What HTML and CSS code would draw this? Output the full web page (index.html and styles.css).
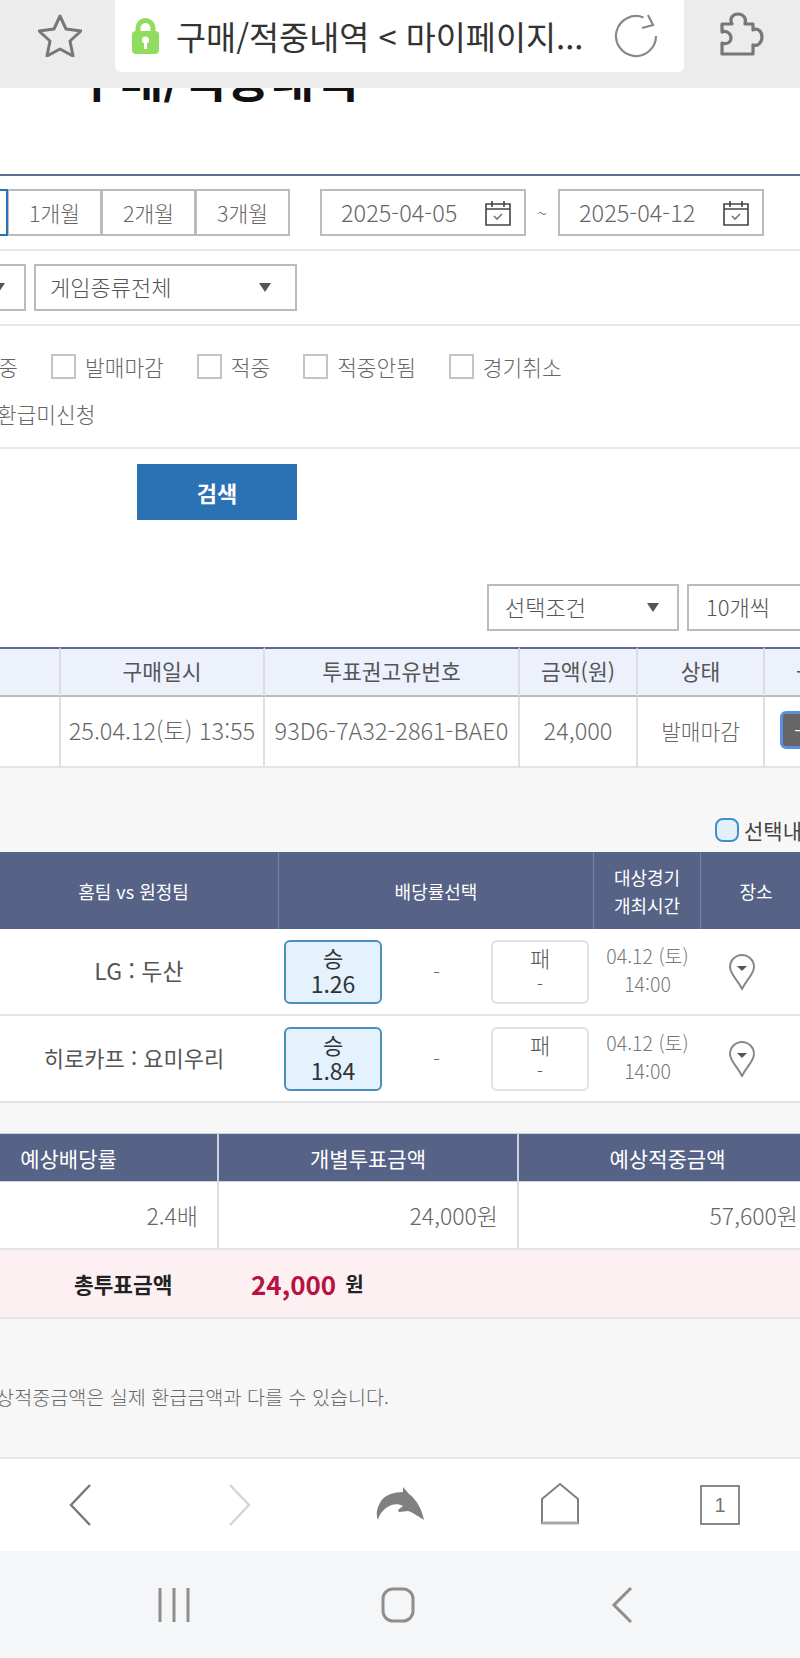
FILE: index.html
```html
<!DOCTYPE html>
<html lang="ko">
<head>
  <meta charset="UTF-8">
  <meta name="viewport" content="width=device-width, initial-scale=1.0">
  <title>구매/적중내역</title>
  <link rel="stylesheet" href="styles.css">
</head>
<body>

  <!-- browser address bar -->
  <header class="topbar">
    <svg class="star" width="44" height="44" viewBox="0 0 44 44"><path d="M22 3l6 13 15 2-11 10 3 15-13-7-13 7 3-15L1 18l15-2z"/></svg>
    <div class="urlbox">
      <svg class="lock" width="27" height="36" viewBox="0 0 27 36"><path d="M6 15V10a7.500 7.500 0 0 1 15 0v5" fill="none" stroke="#8fdc5f" stroke-width="5"/><rect y="13" width="27" height="23" rx="4" fill="#8fdc5f"/><circle cx="13.500" cy="22" r="3.500" fill="#fff"/><rect x="12" y="23" width="3" height="8" fill="#fff"/></svg>
      <span class="urltext">구매/적중내역 &lt; 마이페이지...</span>
      <svg class="reload" width="44" height="44" viewBox="0 0 44 44"><path d="M42 22A20 20 0 1 1 29.500 3.500" fill="none" stroke="#888" stroke-width="2.200"/><path d="M34 1l5 10-11 3" fill="none" stroke="#888" stroke-width="2.200"/></svg>
    </div>
    <svg class="puzzle" width="44" height="44" viewBox="0 0 44 44"><path d="M2 12H12C9 6 13 2 18 2s9 4 7 10H33V18C38 15 42 20 42 25s-4 10-9 8V42H2V31C7 33 11 30 11 26S7 18 2 20Z"/></svg>
  </header>

  <main class="page">
    <h1>구매/적중내역</h1>

    <section class="filters">
      <div class="filter-row dates">
        <div class="period">
          <button class="period-btn on">1주일</button>
          <button class="period-btn">1개월</button>
          <button class="period-btn">2개월</button>
          <button class="period-btn">3개월</button>
        </div>
        <div class="date-box"><span>2025-04-05</span>
          <svg width="26" height="26" viewBox="0 0 26 26"><path d="M1 4h24v21H1zM1 9h24M7 1v6M19 1v6" fill="none" stroke="#444" stroke-width="1.600"/><path d="M9 16l3 3 5-5" fill="none" stroke="#777" stroke-width="1.600"/></svg>
        </div>
        <span class="tilde">~</span>
        <div class="date-box"><span>2025-04-12</span>
          <svg width="26" height="26" viewBox="0 0 26 26"><path d="M1 4h24v21H1zM1 9h24M7 1v6M19 1v6" fill="none" stroke="#444" stroke-width="1.600"/><path d="M9 16l3 3 5-5" fill="none" stroke="#777" stroke-width="1.600"/></svg>
        </div>
      </div>

      <div class="filter-row selects">
        <div class="select sel-off"><span>전체</span><i class="arrow"></i></div>
        <div class="select sel-game"><span>게임종류전체</span><i class="arrow"></i></div>
      </div>

      <div class="filter-row checks">
        <div class="check-line line-one">
          <label class="check"><i class="box"></i>발매중</label>
          <label class="check"><i class="box"></i>발매마감</label>
          <label class="check"><i class="box"></i>적중</label>
          <label class="check"><i class="box"></i>적중안됨</label>
          <label class="check"><i class="box"></i>경기취소</label>
        </div>
        <div class="check-line line-two">
          <label class="check"><i class="box"></i>환급미신청</label>
        </div>
      </div>

      <button class="search-btn">검색</button>
    </section>

    <div class="list-opts">
      <div class="select sel-cond"><span>선택조건</span><i class="arrow"></i></div>
      <div class="select sel-count"><span>10개씩</span><i class="arrow"></i></div>
    </div>

    <table class="list">
      <colgroup><col class="l1"><col class="l2"><col class="l3"><col class="l4"><col class="l5"><col class="l6"></colgroup>
      <tr>
        <th>번호</th><th>구매일시</th><th>투표권고유번호</th><th>금액(원)</th><th>상태</th><th>-</th>
      </tr>
      <tr>
        <td>1</td><td class="num">25.04.12(토) 13:55</td><td class="num">93D6-7A32-2861-BAE0</td><td class="num">24,000</td><td>발매마감</td>
        <td><button class="minus">-</button></td>
      </tr>
    </table>

    <section class="detail">
      <label class="only-selected"><i class="round-box"></i>선택내역만 보기</label>

      <table class="games">
        <colgroup><col class="g1"><col class="g2"><col class="g3"><col class="g4"></colgroup>
        <tr>
          <th>홈팀 vs 원정팀</th><th>배당률선택</th><th>대상경기<br>개최시간</th><th>장소</th>
        </tr>
        <tr>
          <td class="teams short">LG : 두산</td>
          <td>
            <div class="odds">
              <div class="odd picked"><b>승</b><strong>1.26</strong></div>
              <span>-</span>
              <div class="odd"><b>패</b><em>-</em></div>
            </div>
          </td>
          <td class="when">04.12 (토)<br>14:00</td>
          <td class="place"><svg width="28" height="36" viewBox="0 0 28 36"><path d="M14 35C9 25 2 20 2 13a12 12 0 0 1 24 0c0 7-7 12-12 22z" fill="#fff" stroke="#888" stroke-width="2"/><path d="M9 12h10l-5 5z" fill="#555"/></svg></td>
        </tr>
        <tr>
          <td class="teams">히로카프 : 요미우리</td>
          <td>
            <div class="odds">
              <div class="odd picked"><b>승</b><strong>1.84</strong></div>
              <span>-</span>
              <div class="odd"><b>패</b><em>-</em></div>
            </div>
          </td>
          <td class="when">04.12 (토)<br>14:00</td>
          <td class="place"><svg width="28" height="36" viewBox="0 0 28 36"><path d="M14 35C9 25 2 20 2 13a12 12 0 0 1 24 0c0 7-7 12-12 22z" fill="#fff" stroke="#888" stroke-width="2"/><path d="M9 12h10l-5 5z" fill="#555"/></svg></td>
        </tr>
      </table>

      <table class="sums">
        <colgroup><col class="s1"><col class="s2"><col class="s3"></colgroup>
        <tr><th>예상배당률</th><th>개별투표금액</th><th>예상적중금액</th></tr>
        <tr><td>2.4배</td><td>24,000원</td><td>57,600원</td></tr>
      </table>

      <div class="total">
        <span class="total-label">총투표금액</span>
        <span class="total-num">24,000</span>
        <span class="total-unit">원</span>
      </div>

      <p class="notice">※ 예상적중금액은 실제 환급금액과 다를 수 있습니다.</p>
    </section>
  </main>

  <!-- browser toolbar -->
  <nav class="toolbar">
    <svg width="24" height="44" viewBox="0 0 24 44"><path d="M22 2L3 22l19 20" fill="none" stroke="#777" stroke-width="2.400"/></svg>
    <svg width="24" height="44" viewBox="0 0 24 44"><path d="M2 2l19 20L2 42" fill="none" stroke="#d4d4d4" stroke-width="2.400"/></svg>
    <svg width="48" height="40" viewBox="0 0 48 40"><path d="M27 2L33 9C40 14 46 24 48 35C45 33 36 27 32 26L23 27L22 25L27 21C22 18 15 19 10 23C6 26 3 30 2 35C0 30 0 24 5 16C9 10 18 7 27 7Z" fill="#808080"/></svg>
    <svg class="home" width="40" height="44" viewBox="0 0 40 44"><path d="M20 2L38 17v24H2V17z" fill="none" stroke="#808080" stroke-width="2"/><path d="M2 41h36" stroke="#aaa" stroke-width="3"/></svg>
    <div class="tabs">1</div>
  </nav>

  <!-- android navigation -->
  <nav class="androidbar">
    <svg width="34" height="36" viewBox="0 0 34 36"><path d="M3 1v34M17 1v34M31 1v34" stroke="#8e8e8e" stroke-width="3" fill="none"/></svg>
    <svg width="34" height="36" viewBox="0 0 34 36"><rect x="2" y="2" width="30" height="32" rx="10" fill="none" stroke="#8e8e8e" stroke-width="3"/></svg>
    <svg width="22" height="36" viewBox="0 0 22 36"><path d="M20 1L3 18l17 17" fill="none" stroke="#8e8e8e" stroke-width="3"/></svg>
  </nav>

</body>
</html>
```

FILE: styles.css
```css
* {
  box-sizing: border-box;
}

html, body {
  margin: 0;
  height: 100%;
}

body {
  width: 800px;
  height: 1658px;
  display: flex;
  flex-direction: column;
  overflow: hidden;
  font-family: "Noto Sans CJK KR", "Noto Sans", sans-serif;
  font-weight: 300;
  color: #666;
  background-color: #fff;
}

button {
  font-family: inherit;
  font-weight: inherit;
  padding: 0;
}

i, em {
  font-style: normal;
}

/* top bar */
.topbar {
  height: 88px;
  flex: none;
  display: flex;
  align-items: flex-start;
  background-color: #ececec;
}

.star {
  margin: 13px 0 0 38px;
  fill: none;
  stroke: #777;
  stroke-width: 3;
  stroke-linejoin: round;
}

.urlbox {
  width: 569px;
  height: 72px;
  margin-left: 33px;
  padding-left: 17px;
  display: flex;
  align-items: center;
  background-color: #fff;
  border-radius: 0 0 6px 6px;
}

.lock {
  flex: none;
}

.urltext {
  width: 435px;
  margin: -2px 0 0 17px;
  font-size: 32.700px;
  font-weight: 400;
  color: #333;
  white-space: nowrap;
}

.reload {
  margin-left: 3px;
  flex: none;
}

.puzzle {
  margin: 12px 0 0 36px;
  fill: none;
  stroke: #777;
  stroke-width: 3.200;
  stroke-linejoin: round;
}

/* page */
.page {
  flex: 1;
  min-height: 0;
  overflow: hidden;
}

h1 {
  height: 60px;
  margin: -42px 0 68px 75px;
  font-size: 48px;
  line-height: 60px;
  font-weight: 700;
  color: #111;
  white-space: nowrap;
}

.filters {
  border-top: 2px solid #5c6b8f;
}

.filter-row {
  display: flex;
  border-bottom: 2px solid #e8e8e8;
}

.dates, .selects {
  height: 75px;
  padding-top: 13px;
}

.period {
  display: flex;
  margin-left: -86px;
}

.period-btn {
  width: 95px;
  height: 47px;
  margin-left: -1px;
  font-size: 21.500px;
  color: #666;
  background-color: #fff;
  border: 2px solid #bbb;
}

.period-btn.on {
  position: relative;
  border-color: #2b72b4;
}

.date-box {
  width: 206px;
  height: 47px;
  margin-left: 30px;
  padding: 0 13px 0 19px;
  display: flex;
  align-items: center;
  justify-content: space-between;
  font-size: 23.500px;
  border: 2px solid #bbb;
}

.date-box span {
  margin-top: -2px;
}

.tilde {
  width: 32px;
  line-height: 47px;
  text-align: center;
  font-size: 18px;
}

.tilde + .date-box {
  margin-left: 0;
}

.select {
  height: 47px;
  display: flex;
  align-items: center;
  justify-content: space-between;
  font-size: 22px;
  color: #555;
  border: 2px solid #bbb;
  flex: none;
}

.select span {
  margin-top: -3px;
}

.arrow {
  width: 0;
  height: 0;
  border-left: 6px solid transparent;
  border-right: 6px solid transparent;
  border-top: 9px solid #555;
}

.sel-off {
  width: 120px;
  margin-left: -94px;
  padding: 0 19px 0 20px;
}

.sel-game {
  width: 263px;
  margin-left: 8px;
  padding: 0 24px 0 14px;
}

.checks {
  height: 123px;
  padding-top: 17px;
  display: block;
}

.check-line {
  display: flex;
  gap: 33px;
  height: 47px;
  font-size: 21.400px;
  line-height: 47px;
}

.line-one {
  margin-left: -75px;
}

.line-two {
  margin-left: -37px;
}

.check {
  display: flex;
  align-items: center;
  gap: 9px;
  white-space: nowrap;
}

.box {
  width: 25px;
  height: 25px;
  background-color: #fff;
  border: 2px solid #c4c4c4;
}

.search-btn {
  display: block;
  width: 160px;
  height: 56px;
  margin: 15px 0 0 137px;
  font-size: 22px;
  font-weight: 700;
  color: #fff;
  background-color: #2b72b4;
  border: none;
}

.list-opts {
  display: flex;
  gap: 8px;
  padding: 64px 0 16px 487px;
}

.sel-cond {
  width: 192px;
  padding: 0 18px 0 16px;
}

.sel-count {
  width: 160px;
  padding: 0 20px 0 17px;
}

/* tables */
table {
  table-layout: fixed;
  border-collapse: separate;
  border-spacing: 0;
}

.list {
  width: 964px;
  margin-left: -99px;
}

.l1 { width: 160px; }
.l2 { width: 204px; }
.l3 { width: 255px; }
.l4 { width: 118px; }
.l5 { width: 127px; }
.l6 { width: 100px; }

.list th {
  height: 50px;
  padding: 0 0 3px;
  font-size: 21.500px;
  font-weight: 400;
  color: #555;
  background-color: #edf1fb;
  border-top: 2px solid #5c6b8f;
  border-bottom: 2px solid #bbb;
  border-right: 2px solid #ddd;
}

.list th:last-child {
  padding-left: 31px;
  text-align: left;
}

.list td {
  height: 71px;
  padding: 0 0 3px;
  font-size: 21.400px;
  text-align: center;
  white-space: nowrap;
  border-bottom: 2px solid #e4e4e4;
  border-right: 2px solid #e0e0e0;
}

.list td.num {
  font-size: 23.500px;
}

.list td:last-child {
  text-align: left;
  padding-left: 15px;
}

.minus {
  display: block;
  width: 60px;
  height: 38px;
  padding-left: 11px;
  text-align: left;
  font-size: 24px;
  line-height: 30px;
  color: #fff;
  background-color: #666;
  border: 3px solid #5b8fe0;
  border-radius: 6px;
}

.detail {
  height: 691px;
  background-color: #f7f7f7;
}

.only-selected {
  height: 84px;
  padding: 50px 0 0 715px;
  display: flex;
  align-items: flex-start;
  gap: 5px;
  font-size: 21px;
  line-height: 24px;
  font-weight: 400;
  color: #444;
  white-space: nowrap;
}

.round-box {
  width: 24px;
  height: 24px;
  flex: none;
  background-color: #e2f0fb;
  border: 2px solid #3f8fc9;
  border-radius: 8px;
}

.games {
  width: 823px;
  margin-left: -11px;
  background-color: #fff;
}

.g1 { width: 290px; }
.g2 { width: 315px; }
.g3 { width: 107px; }
.g4 { width: 111px; }

.games th {
  height: 77px;
  font-size: 18px;
  line-height: 28px;
  font-weight: 400;
  color: #fff;
  background-color: #566386;
  border-right: 1px solid #77829f;
}

.games td {
  height: 87px;
  padding: 0;
  text-align: center;
  border-bottom: 2px solid #e4e4e4;
}

.games .teams {
  padding-bottom: 4px;
  font-size: 22px;
  font-weight: 400;
  color: #555;
}

.games .short {
  padding-left: 10px;
  font-size: 23px;
}

.odds {
  display: flex;
  justify-content: space-between;
  align-items: center;
  padding: 0 5px;
  font-size: 20px;
}

.odd {
  width: 98px;
  height: 64px;
  padding-bottom: 3px;
  display: flex;
  flex-direction: column;
  align-items: center;
  justify-content: center;
  font-size: 22px;
  line-height: 26px;
  color: #555;
  background-color: #fff;
  border: 2px solid #e2e2e2;
  border-radius: 6px;
}

.odd b {
  font-weight: 300;
}

.odd strong {
  font-size: 23px;
  font-weight: 400;
}

.odd em {
  font-size: 18px;
}

.picked {
  color: #333;
  background-color: #e3f2fd;
  border-color: #4a8fbd;
}

.picked b {
  font-weight: 400;
}

.games .when {
  padding-bottom: 3px;
  font-size: 19.500px;
  line-height: 28px;
  color: #777;
}

.games .place {
  padding-right: 30px;
}

.place svg {
  display: inline-block;
  margin-top: 6px;
}

.sums {
  width: 899px;
  margin: 30px 0 0 -80px;
  background-color: #fff;
}

.s1 { width: 299px; }
.s2 { width: 300px; }
.s3 { width: 300px; }

.sums th {
  height: 49px;
  font-size: 21px;
  font-weight: 400;
  color: #fff;
  background-color: #566386;
  border-right: 2px solid #ccd2de;
  border-top: 1px solid #ccd2de;
  border-bottom: 1px solid #ccd2de;
}

.sums th:last-child {
  padding-right: 2px;
}

.sums td {
  height: 68px;
  padding-right: 19px;
  font-size: 23px;
  text-align: right;
  border-right: 2px solid #e0e0e0;
  border-bottom: 2px solid #e4e4e4;
}

.total {
  height: 69px;
  padding-left: 74px;
  display: flex;
  align-items: center;
  background-color: #fcf0f2;
  border-bottom: 2px solid #e4e4e4;
}

.total-label {
  width: 177px;
  font-size: 21.400px;
  font-weight: 700;
  color: #222;
}

.total-num {
  font-size: 26px;
  font-weight: 700;
  color: #b8123f;
}

.total-unit {
  margin-left: 9px;
  font-size: 20px;
  font-weight: 700;
  color: #222;
}

.notice {
  margin: 65px 0 0 -47px;
  font-size: 19.600px;
  line-height: 26px;
  color: #666;
  white-space: nowrap;
}

/* bottom bars */
.toolbar {
  height: 94px;
  flex: none;
  display: grid;
  grid-template-columns: repeat(5, 160px);
  justify-items: center;
  align-items: center;
  background-color: #fff;
  border-top: 2px solid #e6e6e6;
}

.home {
  margin-top: -2px;
}

.tabs {
  width: 40px;
  height: 40px;
  text-align: center;
  font-family: "Liberation Sans", sans-serif;
  font-size: 20px;
  line-height: 36px;
  color: #777;
  border: 2px solid #888;
}

.androidbar {
  height: 107px;
  flex: none;
  display: grid;
  grid-template-columns: repeat(3, 224px);
  padding-left: 62px;
  justify-items: center;
  align-items: center;
  background-color: #f5f6f8;
}
```
